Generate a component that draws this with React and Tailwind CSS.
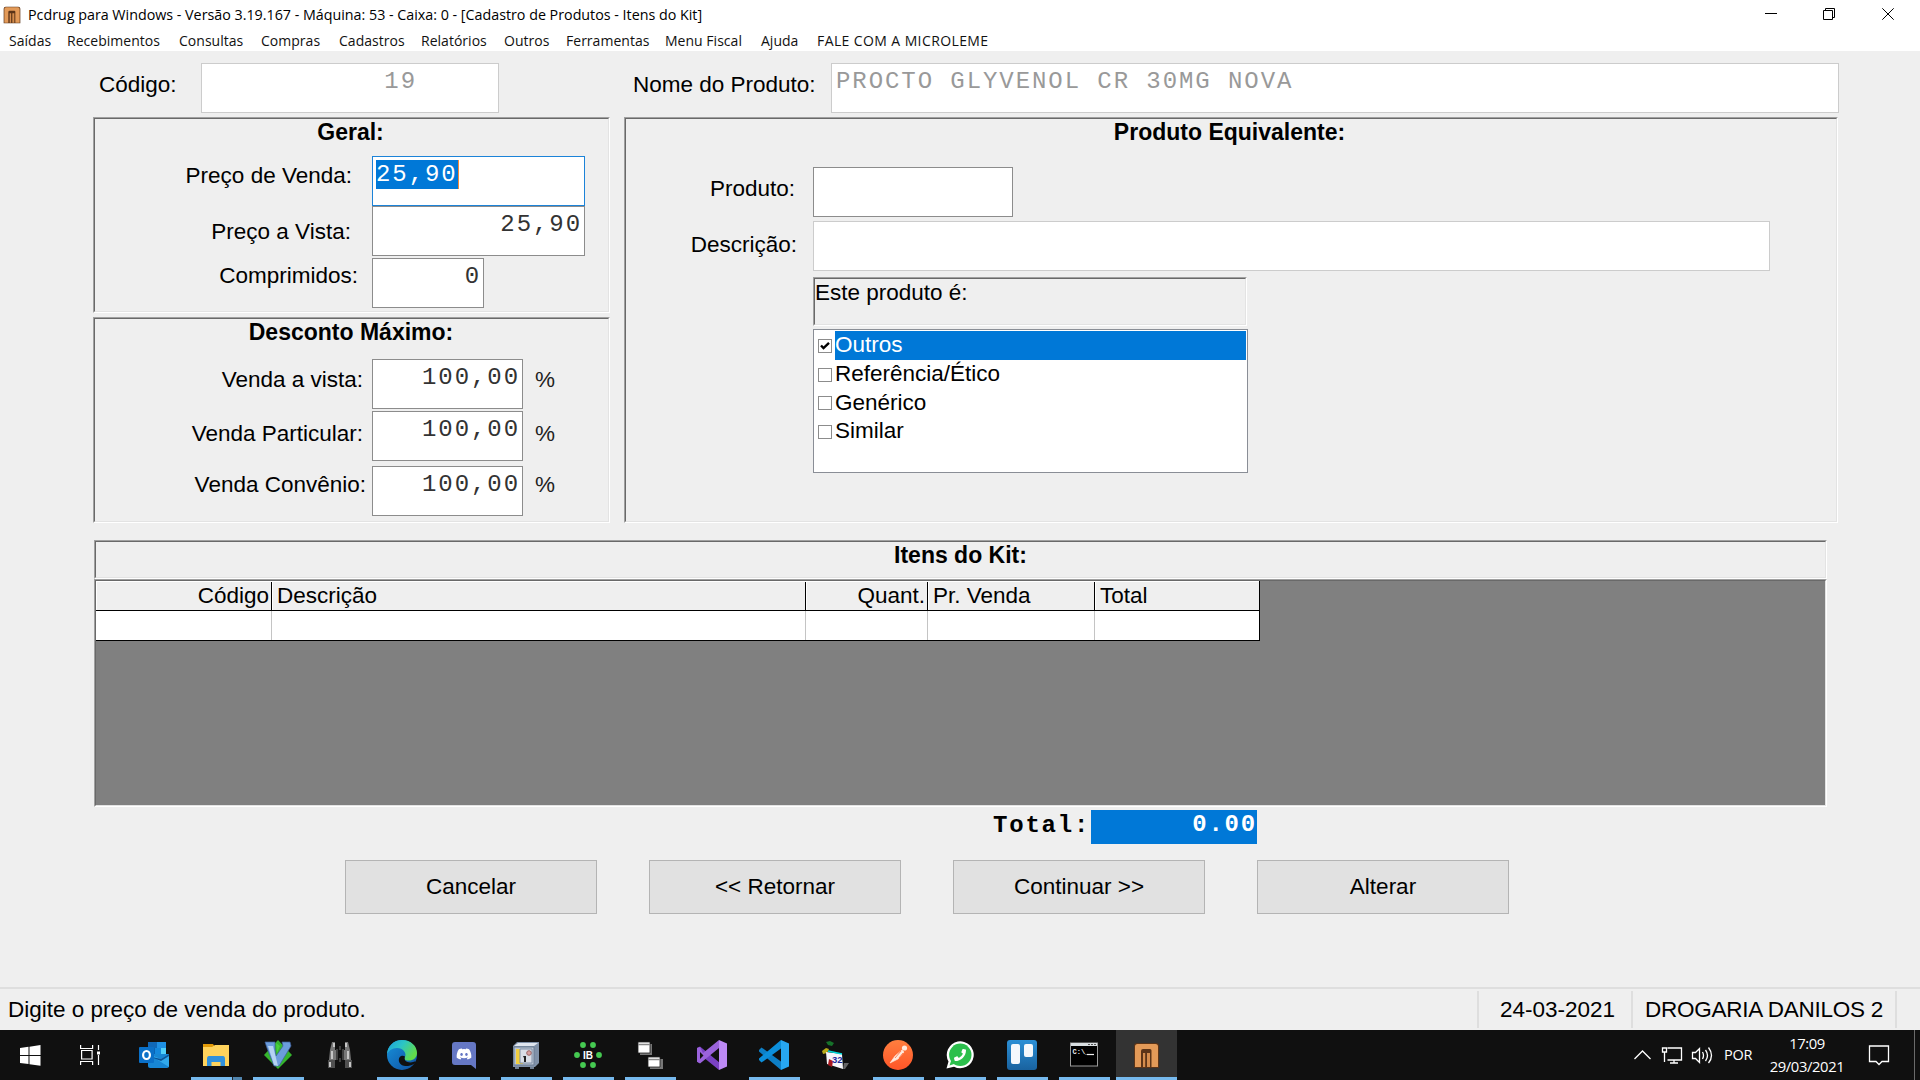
import React from "react";
import { FaDiscord, FaPhoneAlt } from "react-icons/fa";

const MENU = [
  "Saídas", "Recebimentos", "Consultas", "Compras", "Cadastros", "Relatórios",
  "Outros", "Ferramentas", "Menu Fiscal", "Ajuda", "FALE COM A MICROLEME",
];

function Label({ children, className = "" }) {
  return <div className={`leading-[25px] whitespace-nowrap ${className}`}>{children}</div>;
}

function Field({ children, className = "" }) {
  return (
    <div
      className={`h-[50px] shrink-0 border bg-white pt-[3px] font-['Liberation_Mono','Courier_New',monospace] text-[24px] leading-[29px] tracking-[1.93px] whitespace-pre ${className}`}
    >
      {children}
    </div>
  );
}

function Sunken({ children, className = "" }) {
  return (
    <div className={`border border-t-[#a0a0a0] border-l-[#a0a0a0] border-r-white border-b-white ${className}`}>
      <div className="h-full border border-t-[#696969] border-l-[#696969] border-r-[#e3e3e3] border-b-[#e3e3e3]">
        {children}
      </div>
    </div>
  );
}

function MLogo({ size }) {
  return (
    <svg width={size} height={size} viewBox="0 0 27 27">
      <path d="M1 26V4Q1 1 4 1h19q3 0 3 3v22z" fill="#5b3418" />
      <path d="M2 25V4.500Q2 2 4.500 2h18Q25 2 25 4.500V25h-6.500V8.500q0-1.500-1.500-1.500H10Q8 7 8 9v16z" fill="#e39a58" />
      <path d="M10 25v-14h2.200v14zM14 25V11h3v14z" fill="#d48c4d" />
    </svg>
  );
}

function TitleBar() {
  return (
    <div className="flex h-[29px] items-center bg-white">
      <div className="ml-[3px] w-[19px]"><MLogo size={18} /></div>
      <div className="ml-[6px] w-[1718px] text-[14.3px] tracking-[-0.01px] whitespace-nowrap text-black">
        Pcdrug para Windows - Versão 3.19.167 - Máquina: 53 - Caixa: 0 - [Cadastro de Produtos - Itens do Kit]
      </div>
      <svg width="160" height="29" viewBox="0 0 160 29" fill="none" stroke="#000" strokeWidth="1">
        <path d="M19 13.500h12" />
        <path d="M77.500 10.500h9v9h-9zM79.500 10.500v-2h9v9h-2" />
        <path d="M136.300 8.300l11.400 11.400M147.700 8.300l-11.400 11.400" />
      </svg>
    </div>
  );
}

function GeneralPanel() {
  return (
    <Sunken className="h-[196px] w-[517px]">
      <Label className="pt-px pr-[2px] text-center text-[23px] font-bold">Geral:</Label>
      <div className="mt-[11px] flex h-[50px]">
        <Label className="mr-[20px] w-[257px] pt-[7px] text-right">Preço de Venda:</Label>
        <Field className="w-[213px] border-[#1c83d8] pl-[3px]">
          <span className="inline-block w-[83px] border-r border-[#f2883a] bg-[#0078d7] text-white">25,90</span>
        </Field>
      </div>
      <div className="flex h-[51px]">
        <Label className="mr-[21px] w-[256px] pt-[13px] text-right">Preço a Vista:</Label>
        <Field className="w-[213px] border-[#8c8c8c] pr-[2px] text-right text-[#333]">25,90</Field>
      </div>
      <div className="flex h-[50px] pt-px">
        <Label className="mr-[14px] w-[263px] pt-[5px] text-right">Comprimidos:</Label>
        <Field className="w-[112px] border-[#8c8c8c] pr-[2px] text-right text-[#333]">0</Field>
      </div>
    </Sunken>
  );
}

function DiscountPanel() {
  return (
    <Sunken className="mt-[4px] h-[206px] w-[517px]">
      <Label className="pt-px pr-px text-center text-[23px] font-bold">Desconto Máximo:</Label>
      <div className="mt-[14px] flex h-[52px]">
        <Label className="mr-[9px] w-[268px] pt-[8px] text-right">Venda a vista:</Label>
        <Field className="w-[151px] border-[#8c8c8c] pr-[2px] text-right text-[#333]">100,00</Field>
        <Label className="pt-[8px] pl-[12px] text-[#222]">%</Label>
      </div>
      <div className="flex h-[55px]">
        <Label className="mr-[9px] w-[268px] pt-[10px] text-right">Venda Particular:</Label>
        <Field className="w-[151px] border-[#8c8c8c] pr-[2px] text-right text-[#333]">100,00</Field>
        <Label className="pt-[10px] pl-[12px] text-[#222]">%</Label>
      </div>
      <div className="flex h-[50px]">
        <Label className="mr-[6px] w-[271px] pt-[6px] text-right">Venda Convênio:</Label>
        <Field className="w-[151px] border-[#8c8c8c] pr-[2px] text-right text-[#333]">100,00</Field>
        <Label className="pt-[6px] pl-[12px] text-[#222]">%</Label>
      </div>
    </Sunken>
  );
}

const TYPES = ["Outros", "Referência/Ético", "Genérico", "Similar"];

function EquivalentPanel() {
  return (
    <Sunken className="h-[406px] w-[1214px]">
      <Label className="pt-px pr-[3px] text-center text-[23px] font-bold">Produto Equivalente:</Label>
      <div className="mt-[22px] flex h-[50px]">
        <Label className="mr-[18px] w-[169px] pt-[9px] text-right">Produto:</Label>
        <Field className="w-[200px] border-[#8c8c8c]" />
      </div>
      <div className="mt-[4px] flex h-[50px]">
        <Label className="mr-[16px] w-[171px] pt-[11px] text-right">Descrição:</Label>
        <Field className="w-[957px] border-[#ccc]" />
      </div>
      <div className="mt-[6px] ml-[187px] w-[435px]">
        <Sunken className="h-[49px] w-[434px]">
          <Label className="pt-px">Este produto é:</Label>
        </Sunken>
        <div className="mt-[3px] h-[144px] border border-[#8a8e96] bg-white pt-px">
          {TYPES.map((t, i) => (
            <div key={t} className="flex h-[28.8px] items-center pl-[4px]">
              <div className="mt-[1px] mr-[3px] size-[14px] border border-[#8c8c8c] bg-white">
                {i === 0 && (
                  <svg width="12" height="12" viewBox="0 0 12 12">
                    <path d="M2 5.500L4.500 8 10 2.800" fill="none" stroke="#000" strokeWidth="2.400" />
                  </svg>
                )}
              </div>
              <div
                className={
                  i === 0
                    ? "mr-px h-full flex-1 bg-[#0078d7] leading-[27px] text-white"
                    : "h-full flex-1 leading-[27px]"
                }
              >
                {t}
              </div>
            </div>
          ))}
        </div>
      </div>
    </Sunken>
  );
}

const COLS = [
  { t: "Código", right: true },
  { t: "Descrição" },
  { t: "Quant.", right: true },
  { t: "Pr. Venda" },
  { t: "Total" },
];

function KitGrid() {
  return (
    <div className="mt-[17px] ml-[94px] w-[1733px]">
      <Sunken className="h-[39px]">
        <Label className="pt-px text-center text-[23px] font-bold">Itens do Kit:</Label>
      </Sunken>
      <Sunken className="h-[228px] bg-[#808080]">
        <div className="w-[1164px] border-r border-black">
          <div className="grid h-[30px] grid-cols-[176px_534px_122px_167px_164px] border-b border-black">
            {COLS.map((c, i) => (
              <div
                key={c.t}
                className={`border-t border-l border-white bg-[#efefef] leading-[27px] ${i < 4 ? "shadow-[inset_-1px_0_0_#000]" : ""} ${c.right ? "pr-[3px] text-right" : "pl-[4px]"}`}
              >
                {c.t}
              </div>
            ))}
          </div>
          <div className="grid h-[30px] grid-cols-[176px_534px_122px_167px_164px] border-b border-black bg-white">
            {COLS.map((c, i) => (
              <div key={c.t} className={i < 4 ? "border-r border-[#c4c4c4]" : ""} />
            ))}
          </div>
        </div>
      </Sunken>
    </div>
  );
}

function Icon({ children }) {
  return <svg width="30" height="30" viewBox="0 0 30 30">{children}</svg>;
}

const outlook = (
  <Icon>
    <path d="M9 2h18v17H9z" fill="#0a64b4" />
    <path d="M9 2h9v6H9z" fill="#1068b8" /><path d="M18 2h9v6h-9z" fill="#1e90e4" />
    <path d="M16 8h6v6h-6z" fill="#1488dc" /><path d="M22 8h5v8h-5z" fill="#50d0fa" />
    <path d="M9 14h21v12q0 2-2 2H11q-2 0-2-2z" fill="#1786d4" />
    <path d="M9 14l21 13V14l-8 5z" fill="#31a9ec" /><path d="M9 16l13 5 8-5v-2l-8 5z" fill="#0b5397" />
    <rect x="0" y="7" width="15" height="16" rx="1" fill="#0a70c8" />
    <ellipse cx="7.500" cy="15" rx="3.400" ry="4" fill="none" stroke="#fff" strokeWidth="2.200" />
  </Icon>
);
const folder = (
  <Icon>
    <path d="M2 4h10l2 3h-12z" fill="#e29a08" />
    <path d="M2 7h9l3-2h14v21H2z" fill="#ffd35c" />
    <path d="M6 26v-7q0-3 2-3h14q2 0 2 3v7h-4.500v-4h-9v4z" fill="#3191dc" />
  </Icon>
);
const vim = (
  <Icon>
    <path d="M15 0l14 15-14 14L1 15z" fill="#35b52d" />
    <path d="M2 2h10v7l1 7L20 6l-1-4h8l1 4-12 20h-5L4 8z" fill="#6b9ddc" stroke="#3e5f9b" strokeWidth=".7" />
    <path d="M5 6l6 19 4 1-5-20z" fill="#b5d3f2" />
    <path d="M13 3l4 3-3 7z" fill="#49d03c" />
  </Icon>
);
const binoculars = (
  <Icon>
    <path d="M7 2h3v8H5zM20 2h3l2 8h-5zM5 10h6v10H4zM19 10h6l1 10h-7z" fill="#777" />
    <path d="M3 20h7v8H3zM20 20h7v8h-7z" fill="#4f4f4f" />
    <path d="M6 11h2v8H6zM22 11h2v8h-2zM8 3h2v4H8zM20 3h2v4h-2zM4 22h2v5H4zM24 22h2v5h-2z" fill="#c5c5c5" />
    <path d="M12 9v11M18 9v11M15 6v4M15 18v4" stroke="#3f3f3f" strokeWidth="2" />
  </Icon>
);
const edge = (
  <Icon>
    <defs>
      <linearGradient id="eg" x1="0" y1="0" x2="1" y2=".5"><stop offset="0" stopColor="#1b9de0" /><stop offset=".5" stopColor="#2cc5c5" /><stop offset="1" stopColor="#62dc4a" /></linearGradient>
      <linearGradient id="eb" x1="0" y1="0" x2="1" y2="1"><stop offset="0" stopColor="#1792dc" /><stop offset="1" stopColor="#0f4f9f" /></linearGradient>
    </defs>
    <circle cx="15" cy="15" r="15" fill="url(#eb)" />
    <path d="M0 15C0 6 7 0 15 0c9 0 15 6 15 13 0 5-4 7.500-8 7.500-4 0-5.500-1.500-4-3.500C20 13 16 8 10 8 5 8 1 11 0 15z" fill="url(#eg)" />
    <path d="M18 16.500c-3-2-7 0-6 5 1 3.500 5 5 9 4.500 3-.3 5-1.500 7.500-3 1-1 0-2-1.500-1.300-5 2-11 0-9-5.200z" fill="#101010" />
  </Icon>
);
const discord = (
  <svg width="24" height="27" viewBox="0 0 24 27">
    <path d="M3 0h18q3 0 3 3v24l-5-4H3q-3 0-3-3V3q0-3 3-3z" fill="#6577c4" />
    <FaDiscord x="4" y="4" width="16" height="16" color="#fff" />
  </svg>
);
const safe = (
  <Icon>
    <path d="M2 6l4-4h22v21l-4 4H2z" fill="#8091a8" />
    <path d="M3 6l4-3h20l-4 3z" fill="#dfe5ee" />
    <path d="M3 7h20v18H3z" fill="#b9c4d3" stroke="#6b7c92" />
    <path d="M5 9h7v15H5z" fill="#f1cf40" /><path d="M9 9h12v14H9z" fill="#d9dee7" stroke="#8190a6" />
    <circle cx="18" cy="13" r="2.300" fill="#d9a0a0" stroke="#966" /><path d="M12 16h3v6h-2v-4" fill="#222" />
    <path d="M4 27h4v2H4zM19 27h4v2h-4z" fill="#707e90" />
  </Icon>
);
const ib = (
  <Icon>
    <g fill="#45c951">
      {[[10, 5], [20, 5], [4, 15], [26, 15], [10, 25], [20, 25]].map(([x, y]) => <circle key={`${x}-${y}`} cx={x} cy={y} r="2.900" />)}
    </g>
    <text x="15" y="18.500" textAnchor="middle" fontSize="10" fontWeight="bold" fontFamily="Liberation Sans" fill="#fff">IB</text>
  </Icon>
);
const network = (
  <Icon>
    <path d="M5 4h12v11H5zM15 19h13v10H15z" fill="#777" />
    <path d="M3 2h12v11H3zM13 17h12v10H13z" fill="#fff" stroke="#222" strokeWidth=".8" />
    <path d="M3 4.500h12M13 19.500h12" stroke="#888" strokeWidth="1.500" />
  </Icon>
);
const visualStudio = (
  <Icon>
    <path d="M0 8l3-1.500L23 23l-1 7L6 17l-3 6-3-1.300z" fill="#7a41c4" />
    <path d="M0 21.700L3 23.500 22 8V0L6 13l-3-6-3 1z" fill="#9b63dc" />
    <path d="M3 12v7l3.500-3.500z" fill="#101010" />
    <path d="M22 0l8 3.500v23L22 30z" fill="#bd8af5" />
  </Icon>
);
const vsCode = (
  <Icon>
    <path d="M0 10l2.500-2.500L24 23l-2 7L0 11.500z" fill="#0d7fc6" />
    <path d="M0 20l2.500 2.500L24 7l-2-7L0 18.500z" fill="#0c8fdb" />
    <path d="M22 0l8 3.500v23L22 30z" fill="#27a7f2" />
  </Icon>
);
const calendar = (
  <Icon>
    <path d="M5 2l4-1 4 2-2 3-4-1z" fill="#16722a" />
    <path d="M1 11l4-3 3 1-2 4-4 1z" fill="#b8aa18" />
    <path d="M5 12l16 2 1 15-16-5z" fill="#f6f6fa" /><path d="M7 11l14 3" stroke="#0dd" strokeWidth="1.600" />
    <path d="M23 23h5l-4 6h-2z" fill="#666" />
    <path d="M8 19l4 2-1 6-4-2z" fill="#a8181e" />
    <text x="11" y="22.500" fontSize="9.500" fontWeight="bold" fontFamily="Liberation Sans" fill="#1d2a9a">32</text>
  </Icon>
);
const postman = (
  <Icon>
    <defs><linearGradient id="pm" x1="0" y1="0" x2="0" y2="1"><stop offset="0" stopColor="#ff7f3f" /><stop offset="1" stopColor="#ff5528" /></linearGradient></defs>
    <circle cx="15" cy="15" r="15" fill="url(#pm)" />
    <circle cx="21.500" cy="8" r="2.600" fill="#ffe9de" />
    <path d="M19 10l2 2-6 7-8 4 5-7zM13 15l3 2" fill="#ffe9de" stroke="#ffe9de" strokeWidth=".6" />
    <path d="M18 11l-6 7M20 13l-4 5" stroke="#ff6b35" strokeWidth=".8" />
  </Icon>
);
const whatsapp = (
  <div className="grid place-items-center">
    <svg className="col-start-1 row-start-1" width="30" height="30" viewBox="0 0 30 30">
      <path d="M1.500 28.500l2-7A13.500 13.500 0 1 1 9 26.800z" fill="#fff" />
      <circle cx="15.300" cy="14.800" r="11.200" fill="#2bbf4c" />
      <path d="M4.500 25.500l2-6 4 4z" fill="#2bbf4c" />
    </svg>
    <FaPhoneAlt className="col-start-1 row-start-1 -scale-x-100" size={12} color="#fff" />
  </div>
);
const trello = (
  <Icon>
    <defs><linearGradient id="tr" x1="0" y1="0" x2="0" y2="1"><stop offset="0" stopColor="#2b8fd6" /><stop offset="1" stopColor="#19629f" /></linearGradient></defs>
    <rect width="30" height="30" rx="3" fill="url(#tr)" />
    <rect x="4" y="4" width="9" height="20" rx="2" fill="#f4f8fc" /><rect x="17" y="4" width="9" height="13" rx="2" fill="#f4f8fc" />
  </Icon>
);
const terminal = (
  <Icon>
    <rect x="1.500" y="3" width="27" height="23" fill="#000" stroke="#9a9a9a" />
    <path d="M2 3h26v3H2z" fill="#d8dde0" /><path d="M19 4.500h8" stroke="#555" strokeDasharray="2 1" />
    <text x="3.500" y="14" fontSize="7" fontFamily="Liberation Mono" fontWeight="bold" fill="#eee">C:\_</text>
    <path d="M18 14.500h7" stroke="#eee" strokeWidth="1.200" />
  </Icon>
);

const APPS = [
  { id: "outlook", icon: outlook },
  { id: "folder", icon: folder, run: true, stack: true },
  { id: "vim", icon: vim, run: true },
  { id: "binoculars", icon: binoculars },
  { id: "edge", icon: edge, run: true },
  { id: "discord", icon: discord, run: true },
  { id: "safe", icon: safe, run: true },
  { id: "ib", icon: ib, run: true },
  { id: "network", icon: network, run: true },
  { id: "vs", icon: visualStudio },
  { id: "vscode", icon: vsCode, run: true },
  { id: "calendar", icon: calendar },
  { id: "postman", icon: postman, run: true },
  { id: "whatsapp", icon: whatsapp, run: true },
  { id: "trello", icon: trello, run: true },
  { id: "terminal", icon: terminal, run: true },
];

function Taskbar() {
  return (
    <div className="flex h-[50px] bg-[#101010] text-white">
      <div className="flex w-[60px] items-center justify-center">
        <svg width="21" height="21" viewBox="0 0 21 21" fill="#fff">
          <path d="M0 3l8.500-1.200V10H0zM9.500 1.700L20.500 0v10h-11zM0 11h8.500v8L0 18zM9.500 11h11v9.700l-11-1.500z" />
        </svg>
      </div>
      <div className="flex w-[63px] items-center pl-[20px]">
        <svg width="21" height="20" viewBox="0 0 21 20" fill="none" stroke="#fff" strokeWidth="1.200">
          <path d="M.6 0v3.500h12V0M.6 20v-3.500h12V20M1.600 5.500h10.500v8.500H1.600zM18.500 0v5M18.500 10v10" />
          <path d="M17 6.500h3v3h-3z" fill="#fff" stroke="none" />
        </svg>
      </div>
      {APPS.map((a) => (
        <div key={a.id} className="flex w-[62px] flex-col items-center">
          <div className="flex h-[47px] items-center pt-[3px]">{a.icon}</div>
          {a.run && (
            <div className="flex h-[3px] w-[51px] bg-[#76b9ed]">
              {a.stack && <div className="ml-auto w-[10px] border-l border-[#222] bg-[#5184ad]" />}
            </div>
          )}
        </div>
      ))}
      <div className="ml-px flex w-[61px] flex-col items-center bg-[#333]">
        <div className="flex h-[47px] items-center pt-[3px]"><MLogo size={27} /></div>
        <div className="h-[3px] w-full bg-[#76b9ed]" />
      </div>
      <div className="ml-auto flex items-center">
        <svg width="80" height="24" viewBox="0 0 80 24" fill="none" stroke="#fff" strokeWidth="1.300">
          <path d="M1.500 16l8-8 8 8" />
          <path d="M34.500 5H48.500v12H34.500M31.500 9v10M29.500 5h4v4h-4zM41 17v3M37 20h8" />
          <path d="M59.500 9.500h3l4-4v14l-4-4h-3zM69.500 9q2 3.500 0 7M72.500 7q4 5.500 0 11M75.500 4.500q6 8 0 15.500" />
        </svg>
        <div className="ml-[11px] w-[31px] text-[14.5px] tracking-[-0.3px]">POR</div>
        <div className="ml-[10px] w-[84px] text-center text-[14.8px] leading-[23px] tracking-[-0.4px]">
          <div>17:09</div>
          <div>29/03/2021</div>
        </div>
        <svg className="ml-[19px]" width="22" height="22" viewBox="0 0 22 22" fill="none" stroke="#fff" strokeWidth="1.300">
          <path d="M1.500 2h19v15.500h-6.500l-3 3-3-3H1.500z" />
        </svg>
        <div className="ml-[24px] h-[50px] w-[6px] border-l border-[#6a6a6a]" />
      </div>
    </div>
  );
}

export default function App() {
  return (
    <div className="flex h-[1080px] w-[1920px] flex-col overflow-hidden bg-[#efefef] font-['Open_Sans','Noto_Sans',sans-serif]">
      <TitleBar />
      <div className="grid h-[22px] grid-cols-[58px_112px_82px_78px_82px_83px_62px_99px_96px_56px_auto] bg-white pl-[9px] text-[14px] leading-[24px] tracking-[0.02px] text-[#111]">
        {MENU.map((m, i) => (
          <div key={m} className={`whitespace-nowrap ${i === MENU.length - 1 ? "tracking-[0.4px]" : ""}`}>{m}</div>
        ))}
      </div>

      <div className="flex h-[979px] flex-col font-['Liberation_Sans',Arial,sans-serif] text-[22.5px] text-black">
        <div className="flex pt-[12px]">
          <Label className="w-[201px] pt-[9px] pl-[99px]">Código:</Label>
          <Field className="w-[298px] border-[#ccc] pr-[81px] text-right text-[#999]">19</Field>
          <Label className="w-[332px] pt-[9px] pl-[134px]">Nome do Produto:</Label>
          <Field className="w-[1008px] border-[#ccc] pl-[4px] text-[#999]">PROCTO GLYVENOL CR 30MG NOVA</Field>
        </div>
        <div className="mt-[4px] ml-[93px] flex gap-[14px]">
          <div>
            <GeneralPanel />
            <DiscountPanel />
          </div>
          <EquivalentPanel />
        </div>
        <KitGrid />
        <div className="mt-[3px] ml-[993px] flex h-[34px] font-['Liberation_Mono','Courier_New',monospace] text-[24px] leading-[27px] font-bold tracking-[1.8px]">
          <div className="w-[98px] pt-[2px]">Total:</div>
          <div className="w-[166px] bg-[#0078d7] pt-px text-right text-white">0.00</div>
        </div>
        <div className="mt-[16px] ml-[345px] flex gap-[52px]">
          {["Cancelar", "<< Retornar", "Continuar >>", "Alterar"].map((b) => (
            <button key={b} className="h-[54px] w-[252px] border border-[#b4b4b4] bg-[#e1e1e1] text-center">{b}</button>
          ))}
        </div>
        <div className="mt-auto flex h-[43px] border-t-2 border-[#dedede] pt-[2px] pb-[2px]">
          <Label className="w-[1477px] pt-[6px] pl-[8px]">Digite o preço de venda do produto.</Label>
          <Label className="w-[154px] border-l-2 border-[#dedede] pt-[6px] pl-[21px]">24-03-2021</Label>
          <Label className="w-[266px] border-x-2 border-[#dedede] pt-[6px] pl-[12px] tracking-[-0.25px]">DROGARIA DANILOS 2</Label>
        </div>
      </div>
      <Taskbar />
    </div>
  );
}
